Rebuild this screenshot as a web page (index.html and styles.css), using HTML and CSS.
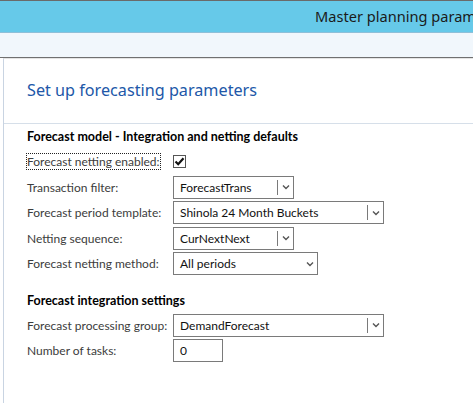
FILE: index.html
```html
<!DOCTYPE html>
<html>
<head>
<meta charset="utf-8">
<link rel="stylesheet" href="styles.css">
</head>
<body>
<div class="titlebar"><span class="wintitle">Master planning parameters (1) - Company: USMF</span></div>
<div class="toolbar"></div>
<div class="content">
  <h1 class="pagetitle">Set up forecasting parameters</h1>
  <div class="sections">
    <div class="group">
      <div class="grouphead">Forecast model - Integration and netting defaults</div>
      <div class="row">
        <span class="label focus">Forecast netting enabled:</span>
        <span class="check"><svg width="11" height="11" viewBox="0 0 11 11"><path d="M1.5 5.5 L4.2 8.2 L9.5 2.2" fill="none" stroke="#111" stroke-width="2.2"/></svg></span>
      </div>
      <div class="row">
        <span class="label">Transaction filter:</span>
        <span class="combo w120"><span class="val">ForecastTrans</span><span class="btn"><svg width="8" height="6" viewBox="0 0 8 6"><path d="M1 1.5 L4 4.5 L7 1.5" fill="none" stroke="#555" stroke-width="1.4"/></svg></span></span>
      </div>
      <div class="row">
        <span class="label">Forecast period template:</span>
        <span class="combo w210"><span class="val">Shinola 24 Month Buckets</span><span class="btn"><svg width="8" height="6" viewBox="0 0 8 6"><path d="M1 1.5 L4 4.5 L7 1.5" fill="none" stroke="#555" stroke-width="1.4"/></svg></span></span>
      </div>
      <div class="row">
        <span class="label">Netting sequence:</span>
        <span class="combo w120"><span class="val">CurNextNext</span><span class="btn"><svg width="8" height="6" viewBox="0 0 8 6"><path d="M1 1.5 L4 4.5 L7 1.5" fill="none" stroke="#555" stroke-width="1.4"/></svg></span></span>
      </div>
      <div class="row">
        <span class="label">Forecast netting method:</span>
        <span class="combo w144 plain"><span class="val">All periods</span><span class="btn"><svg width="8" height="6" viewBox="0 0 8 6"><path d="M1 1.5 L4 4.5 L7 1.5" fill="none" stroke="#555" stroke-width="1.4"/></svg></span></span>
      </div>
    </div>
    <div class="group second">
      <div class="grouphead">Forecast integration settings</div>
      <div class="row">
        <span class="label">Forecast processing group:</span>
        <span class="combo w210"><span class="val">DemandForecast</span><span class="btn"><svg width="8" height="6" viewBox="0 0 8 6"><path d="M1 1.5 L4 4.5 L7 1.5" fill="none" stroke="#555" stroke-width="1.4"/></svg></span></span>
      </div>
      <div class="row">
        <span class="label">Number of tasks:</span>
        <span class="field w49"><span class="val">0</span></span>
      </div>
    </div>
  </div>
</div>
</body>
</html>
```
FILE: styles.css
```css
html, body {
  margin: 0;
  padding: 0;
  background: #fff;
  width: 473px;
  height: 404px;
  overflow: hidden;
}
body {
  font-family: "Lato", "Noto Sans", sans-serif;
  color: #000;
}
.titlebar {
  height: 31px;
  border-top: 1px solid #6a6a6a;
  background: #66c9e9;
  white-space: nowrap;
  overflow: hidden;
}
.wintitle {
  display: block;
  padding-left: 315px;
  font-family: "Noto Sans", sans-serif;
  font-size: 14.6px;
  line-height: 30px;
  color: #1b1b1b;
}
.toolbar {
  height: 24px;
  border-top: 1px solid #8fbfd8;
  background: #f1f7fc;
  border-bottom: 1px solid #707070;
}
.content {
  margin-left: 3px;
  border-left: 1px solid #c9d4e2;
  border-top: 1px solid #e4e4e4;
  height: 344px;
}
.pagetitle {
  margin: 0;
  padding: 20px 0 0 23px;
  height: 44px;
  font-family: "Noto Sans", sans-serif;
  font-weight: normal;
  font-size: 16.2px;
  line-height: 22px;
  color: #2157a8;
  border-bottom: 1px solid #d6dfe9;
}
.sections {
  padding-left: 23px;
}
.group {
  padding-top: 4px;
}
.grouphead {
  font-weight: bold;
  font-size: 12.5px;
  line-height: 18px;
  height: 21px;
}
.row {
  display: flex;
  align-items: center;
  height: 25.5px;
}
.label {
  width: 146px;
  flex: none;
  font-size: 12px;
  color: #3c3c3c;
  white-space: nowrap;
}
.label.focus {
  outline: 1px dotted #222;
  outline-offset: 0;
  width: auto;
  margin-right: 13px;
}
.check {
  width: 11px;
  height: 11px;
  border: 1px solid #555;
  display: flex;
  align-items: center;
  justify-content: center;
}
.combo, .field {
  box-sizing: border-box;
  height: 23px;
  border: 1px solid #7a7a7a;
  display: flex;
  align-items: center;
  font-size: 12px;
  color: #111;
  background: #fff;
}
.val {
  flex: 1;
  padding-left: 6px;
  white-space: nowrap;
}
.btn {
  width: 15px;
  height: 15px;
  border-left: 1px solid #7a7a7a;
  display: flex;
  align-items: center;
  justify-content: center;
}
.plain .btn {
  border-left: none;
}
.w120 { width: 121px; }
.w210 { width: 211px; }
.w144 { width: 145px; }
.w49 { width: 50px; }
.second {
  padding-top: 15px;
}
```
